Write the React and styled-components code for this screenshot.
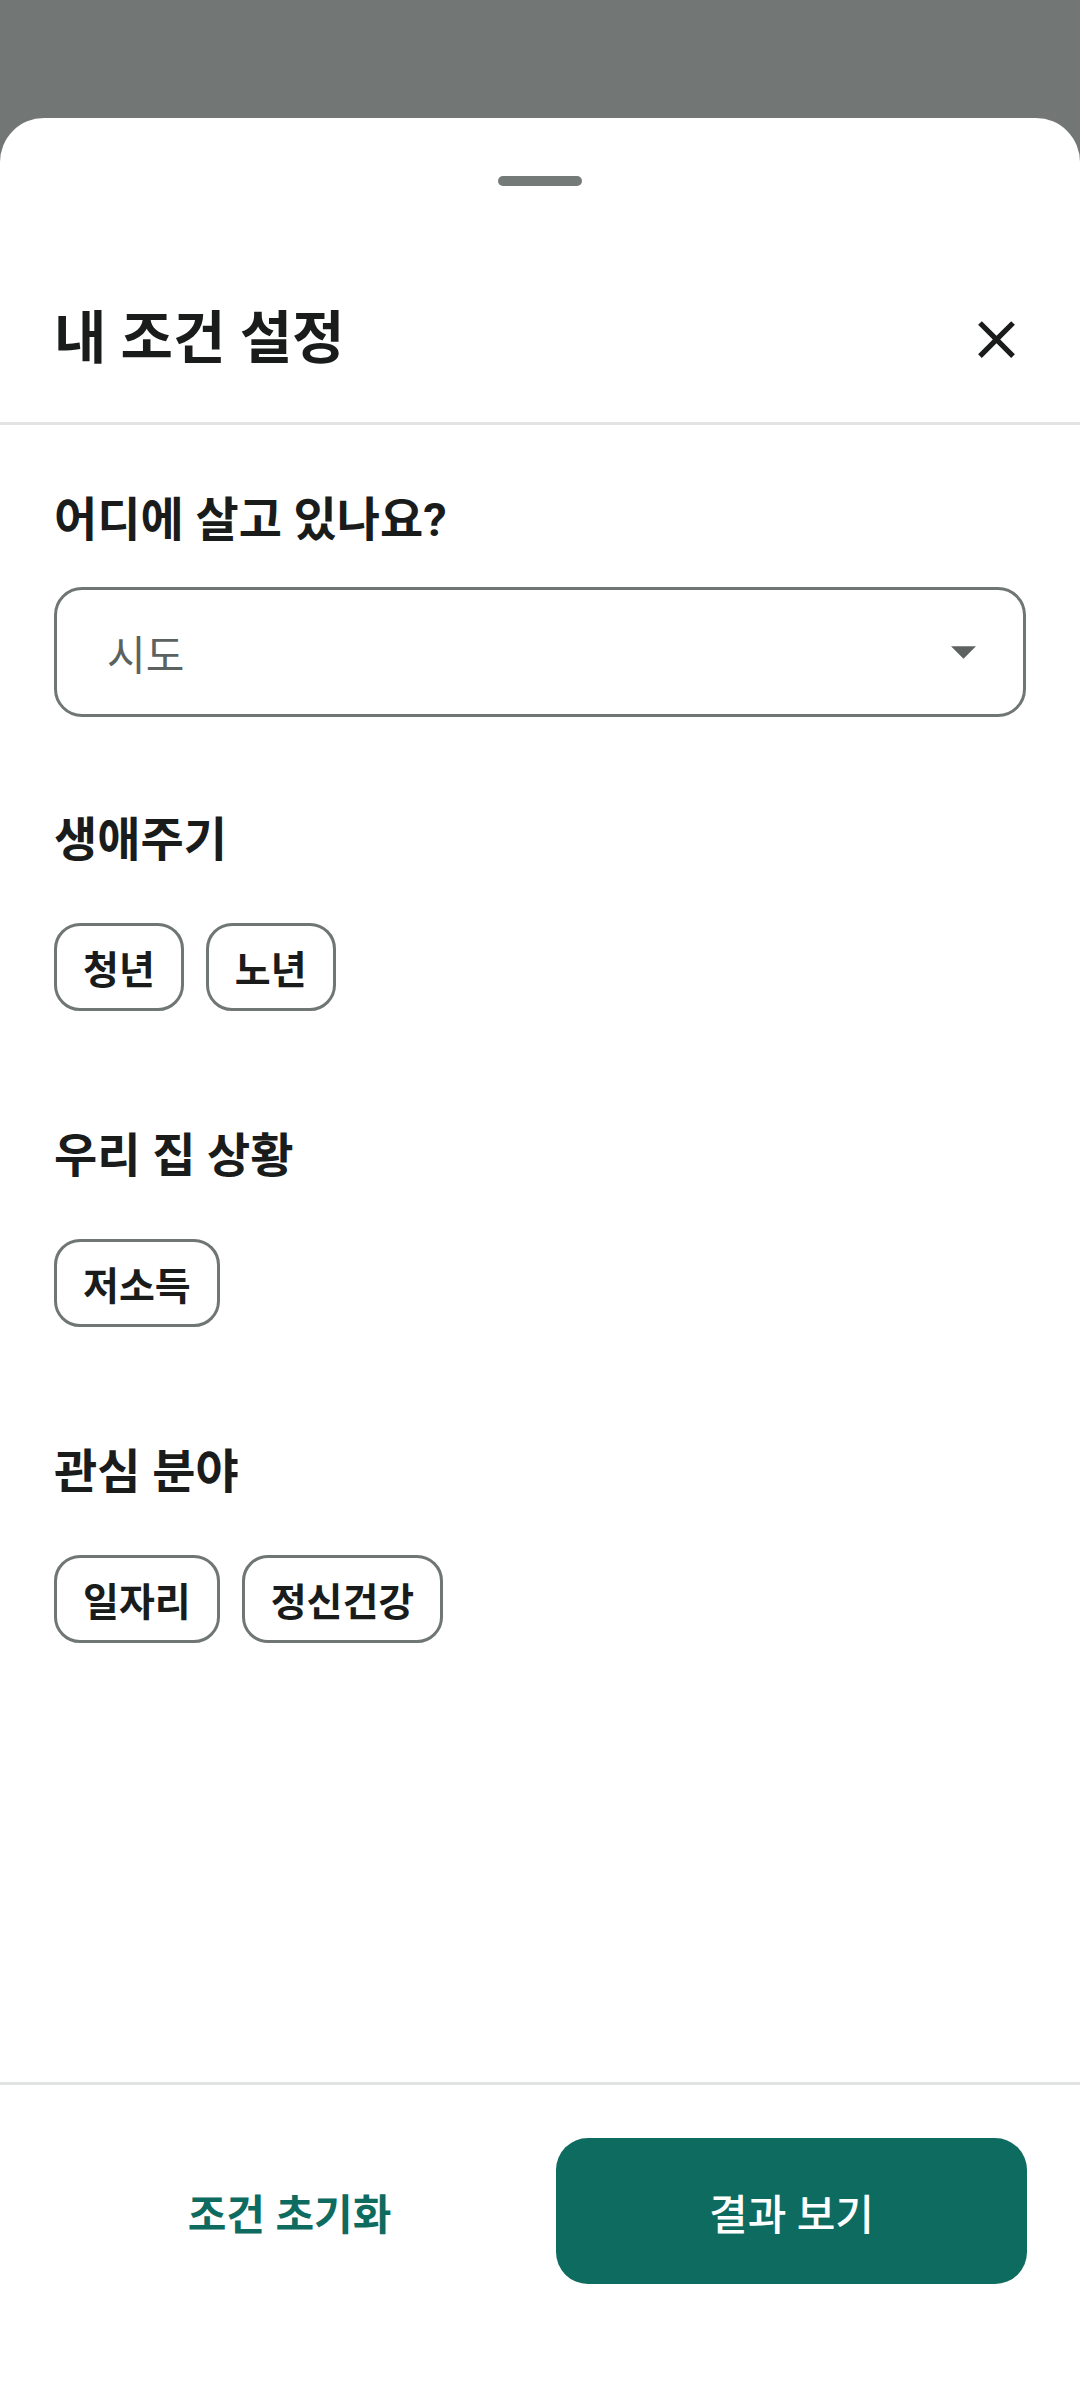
import React from "react";
import styled, { createGlobalStyle } from "styled-components";

const GlobalStyle = createGlobalStyle`
  html, body {
    margin: 0;
    padding: 0;
    background: #727776;
  }
  body {
    font-family: Roboto, "Noto Sans CJK KR", "Noto Sans", sans-serif;
    color: #191c1b;
    -webkit-font-smoothing: antialiased;
  }
  * { box-sizing: border-box; }
`;

const Screen = styled.div`
  min-height: 2400px;
  background: #727776;
  padding-top: 118px;
  display: flex;
  flex-direction: column;
`;

const Sheet = styled.div`
  flex: 1;
  background: #ffffff;
  border-radius: 44px 44px 0 0;
  display: flex;
  flex-direction: column;
  min-height: 2282px;
`;

const HandleArea = styled.div`
  display: flex;
  justify-content: center;
  padding: 58px 0;
`;

const Handle = styled.div`
  width: 84px;
  height: 10px;
  border-radius: 5px;
  background: #737a78;
`;

const Header = styled.div`
  height: 166px;
  margin-top: 12px;
  display: flex;
  align-items: center;
  justify-content: space-between;
  padding: 0 52px 0 54px;
`;

const Title = styled.h1`
  margin: 0;
  font-size: 57px;
  line-height: 1.2;
  font-weight: 700;
  color: #191c1b;
`;

const IconButton = styled.button`
  width: 63px;
  height: 63px;
  padding: 0;
  border: none;
  background: transparent;
  display: flex;
  align-items: center;
  justify-content: center;
  color: #191c1b;
`;

const Divider = styled.div`
  height: 3px;
  background: #e1e4e2;
  flex-shrink: 0;
`;

const Content = styled.div`
  flex: 1;
  padding: 66px 54px 0;
  display: flex;
  flex-direction: column;
  gap: 92px;
`;

const Section = styled.section`
  display: flex;
  flex-direction: column;
`;

const SectionTitle = styled.h2`
  margin: 0 0 39px;
  font-size: 47px;
  line-height: 57px;
  font-weight: 700;
  color: #191c1b;
`;

const Select = styled.div`
  height: 130px;
  border: 3px solid #6f7673;
  border-radius: 28px;
  display: flex;
  align-items: center;
  justify-content: space-between;
  padding: 0 47px 0 50px;
  margin-bottom: 2px;
`;

const SelectText = styled.span`
  font-size: 42px;
  font-weight: 400;
  color: #5c6260;
`;

const ChipRow = styled.div`
  display: flex;
  flex-wrap: wrap;
  gap: 22px;
  padding: 16px 0 24px;
`;

const Chip = styled.button`
  height: 88px;
  padding: 0 26px;
  border: 3px solid #6f7673;
  border-radius: 26px;
  background: #ffffff;
  font-family: inherit;
  font-size: 39px;
  font-weight: 700;
  color: #191c1b;
  display: flex;
  align-items: center;
`;

const Footer = styled.div`
  border-top: 3px solid #e1e4e2;
  padding: 53px 53px 116px 54px;
  display: grid;
  grid-template-columns: 1fr 1fr;
  gap: 31px;
`;

const FooterButton = styled.button`
  height: 146px;
  border: none;
  border-radius: 32px;
  font-family: inherit;
  font-size: 42px;
  font-weight: ${(p) => (p.$primary ? 500 : 700)};
  background: ${(p) => (p.$primary ? "#0d6b60" : "transparent")};
  color: ${(p) => (p.$primary ? "#ffffff" : "#0d6b60")};
  display: flex;
  align-items: center;
  justify-content: center;
`;

const CloseIcon = () => (
  <svg width="63" height="63" viewBox="0 0 24 24" fill="currentColor">
    <path d="M19 6.41L17.59 5 12 10.59 6.41 5 5 6.41 10.59 12 5 17.59 6.41 19 12 13.41 17.59 19 19 17.59 13.41 12z" />
  </svg>
);

const DropIcon = () => (
  <svg width="25" height="13" viewBox="0 0 10 5" fill="#5e6361">
    <path d="M0 0l5 5 5-5z" />
  </svg>
);

const sections = [
  { title: "생애주기", chips: ["청년", "노년"] },
  { title: "우리 집 상황", chips: ["저소득"] },
  { title: "관심 분야", chips: ["일자리", "정신건강"] },
];

export default function App() {
  return (
    <>
      <GlobalStyle />
      <Screen>
        <Sheet>
          <HandleArea>
            <Handle />
          </HandleArea>
          <Header>
            <Title>내 조건 설정</Title>
            <IconButton aria-label="닫기">
              <CloseIcon />
            </IconButton>
          </Header>
          <Divider />
          <Content>
            <Section>
              <SectionTitle>어디에 살고 있나요?</SectionTitle>
              <Select>
                <SelectText>시도</SelectText>
                <DropIcon />
              </Select>
            </Section>
            {sections.map((s) => (
              <Section key={s.title}>
                <SectionTitle>{s.title}</SectionTitle>
                <ChipRow>
                  {s.chips.map((c) => (
                    <Chip key={c}>{c}</Chip>
                  ))}
                </ChipRow>
              </Section>
            ))}
          </Content>
          <Footer>
            <FooterButton>조건 초기화</FooterButton>
            <FooterButton $primary>결과 보기</FooterButton>
          </Footer>
        </Sheet>
      </Screen>
    </>
  );
}
